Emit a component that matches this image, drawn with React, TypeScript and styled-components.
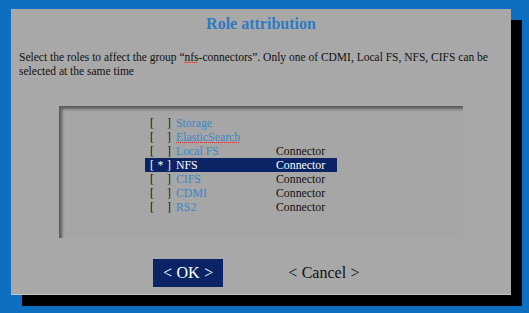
import React from "react";
import styled, { createGlobalStyle } from "styled-components";

const GlobalStyle = createGlobalStyle`
  html, body {
    margin: 0;
    padding: 0;
    background: #0e6fc2;
  }
  body {
    font-family: "Liberation Serif", "Times New Roman", serif;
  }
`;

const Screen = styled.div`
  width: 529px;
  height: 313px;
  box-sizing: border-box;
  padding: 9px 0 0 11px;
  background: #0e6fc2;
  overflow: hidden;
`;

const Dialog = styled.div`
  width: 500px;
  height: 286px;
  box-sizing: border-box;
  background: #a8a8a8;
  box-shadow: 11px 11px 0 #000;
  border-bottom: 1px solid #c2c2c2;
  display: flex;
  flex-direction: column;
  padding-top: 5px;
`;

const Title = styled.h1`
  margin: 0;
  font-size: 16px;
  line-height: 20px;
  font-weight: bold;
  text-align: center;
  color: #2c7bc3;
`;

const Description = styled.p`
  margin: 16px 0 0 0;
  padding: 0 8px;
  font-size: 11.5px;
  line-height: 14px;
  color: #111;
`;

const Misspelled = styled.span`
  text-decoration: underline dotted #d0312d;
  text-decoration-thickness: 1px;
  text-underline-offset: 1px;
`;

const Panel = styled.div`
  margin: 28px 0 0 48px;
  width: 404px;
  height: 132px;
  box-sizing: border-box;
  background: #a6a6a6;
  box-shadow: inset 3px 3px 3px rgba(0, 0, 0, 0.45);
  padding: 10px 0 0 86px;
  display: flex;
  flex-direction: column;
`;

const Row = styled.div<{ $selected?: boolean }>`
  width: 192px;
  height: 14px;
  display: grid;
  grid-template-columns: 31px 100px 1fr;
  align-items: center;
  font-size: 11.8px;
  line-height: 14px;
  background: ${(p) => (p.$selected ? "#0b2466" : "transparent")};
  color: ${(p) => (p.$selected ? "#fff" : "#111")};
`;

const Check = styled.span`
  display: flex;
  padding-left: 5px;
`;

const Mark = styled.span`
  width: 13px;
  text-align: center;
`;

const Label = styled.span<{ $selected?: boolean }>`
  color: ${(p) => (p.$selected ? "#fff" : "#3a86c9")};
  white-space: nowrap;
`;

const Kind = styled.span`
  white-space: nowrap;
`;

const Buttons = styled.div`
  margin: 21px 0 0 142px;
  display: flex;
  align-items: center;
  gap: 55px;
`;

const Button = styled.button<{ $primary?: boolean }>`
  height: 28px;
  padding: 0 10px;
  min-width: 70px;
  border: none;
  font-family: "Liberation Serif", "Times New Roman", serif;
  font-size: 16px;
  word-spacing: 0.5px;
  background: ${(p) => (p.$primary ? "#0b2466" : "transparent")};
  color: ${(p) => (p.$primary ? "#fff" : "#111")};
  cursor: pointer;
`;

type Role = { name: string; kind?: string; checked?: boolean; misspelled?: boolean };

const roles: Role[] = [
  { name: "Storage" },
  { name: "ElasticSearch", misspelled: true },
  { name: "Local FS", kind: "Connector" },
  { name: "NFS", kind: "Connector", checked: true },
  { name: "CIFS", kind: "Connector" },
  { name: "CDMI", kind: "Connector" },
  { name: "RS2", kind: "Connector" },
];

export default function App() {
  return (
    <>
      <GlobalStyle />
      <Screen>
        <Dialog>
          <Title>Role attribution</Title>
          <Description>
            Select the roles to affect the group “<Misspelled>nfs</Misspelled>-connectors”. Only one of CDMI, Local FS,
            NFS, CIFS can be selected at the same time
          </Description>
          <Panel>
            {roles.map((r) => (
              <Row key={r.name} $selected={r.checked}>
                <Check>
                  <span>[</span>
                  <Mark>{r.checked ? "*" : "\u00a0"}</Mark>
                  <span>]</span>
                </Check>
                <Label $selected={r.checked}>
                  {r.misspelled ? <Misspelled>{r.name}</Misspelled> : r.name}
                </Label>
                <Kind>{r.kind ?? ""}</Kind>
              </Row>
            ))}
          </Panel>
          <Buttons>
            <Button $primary>&lt; OK &gt;</Button>
            <Button>&lt; Cancel &gt;</Button>
          </Buttons>
        </Dialog>
      </Screen>
    </>
  );
}
